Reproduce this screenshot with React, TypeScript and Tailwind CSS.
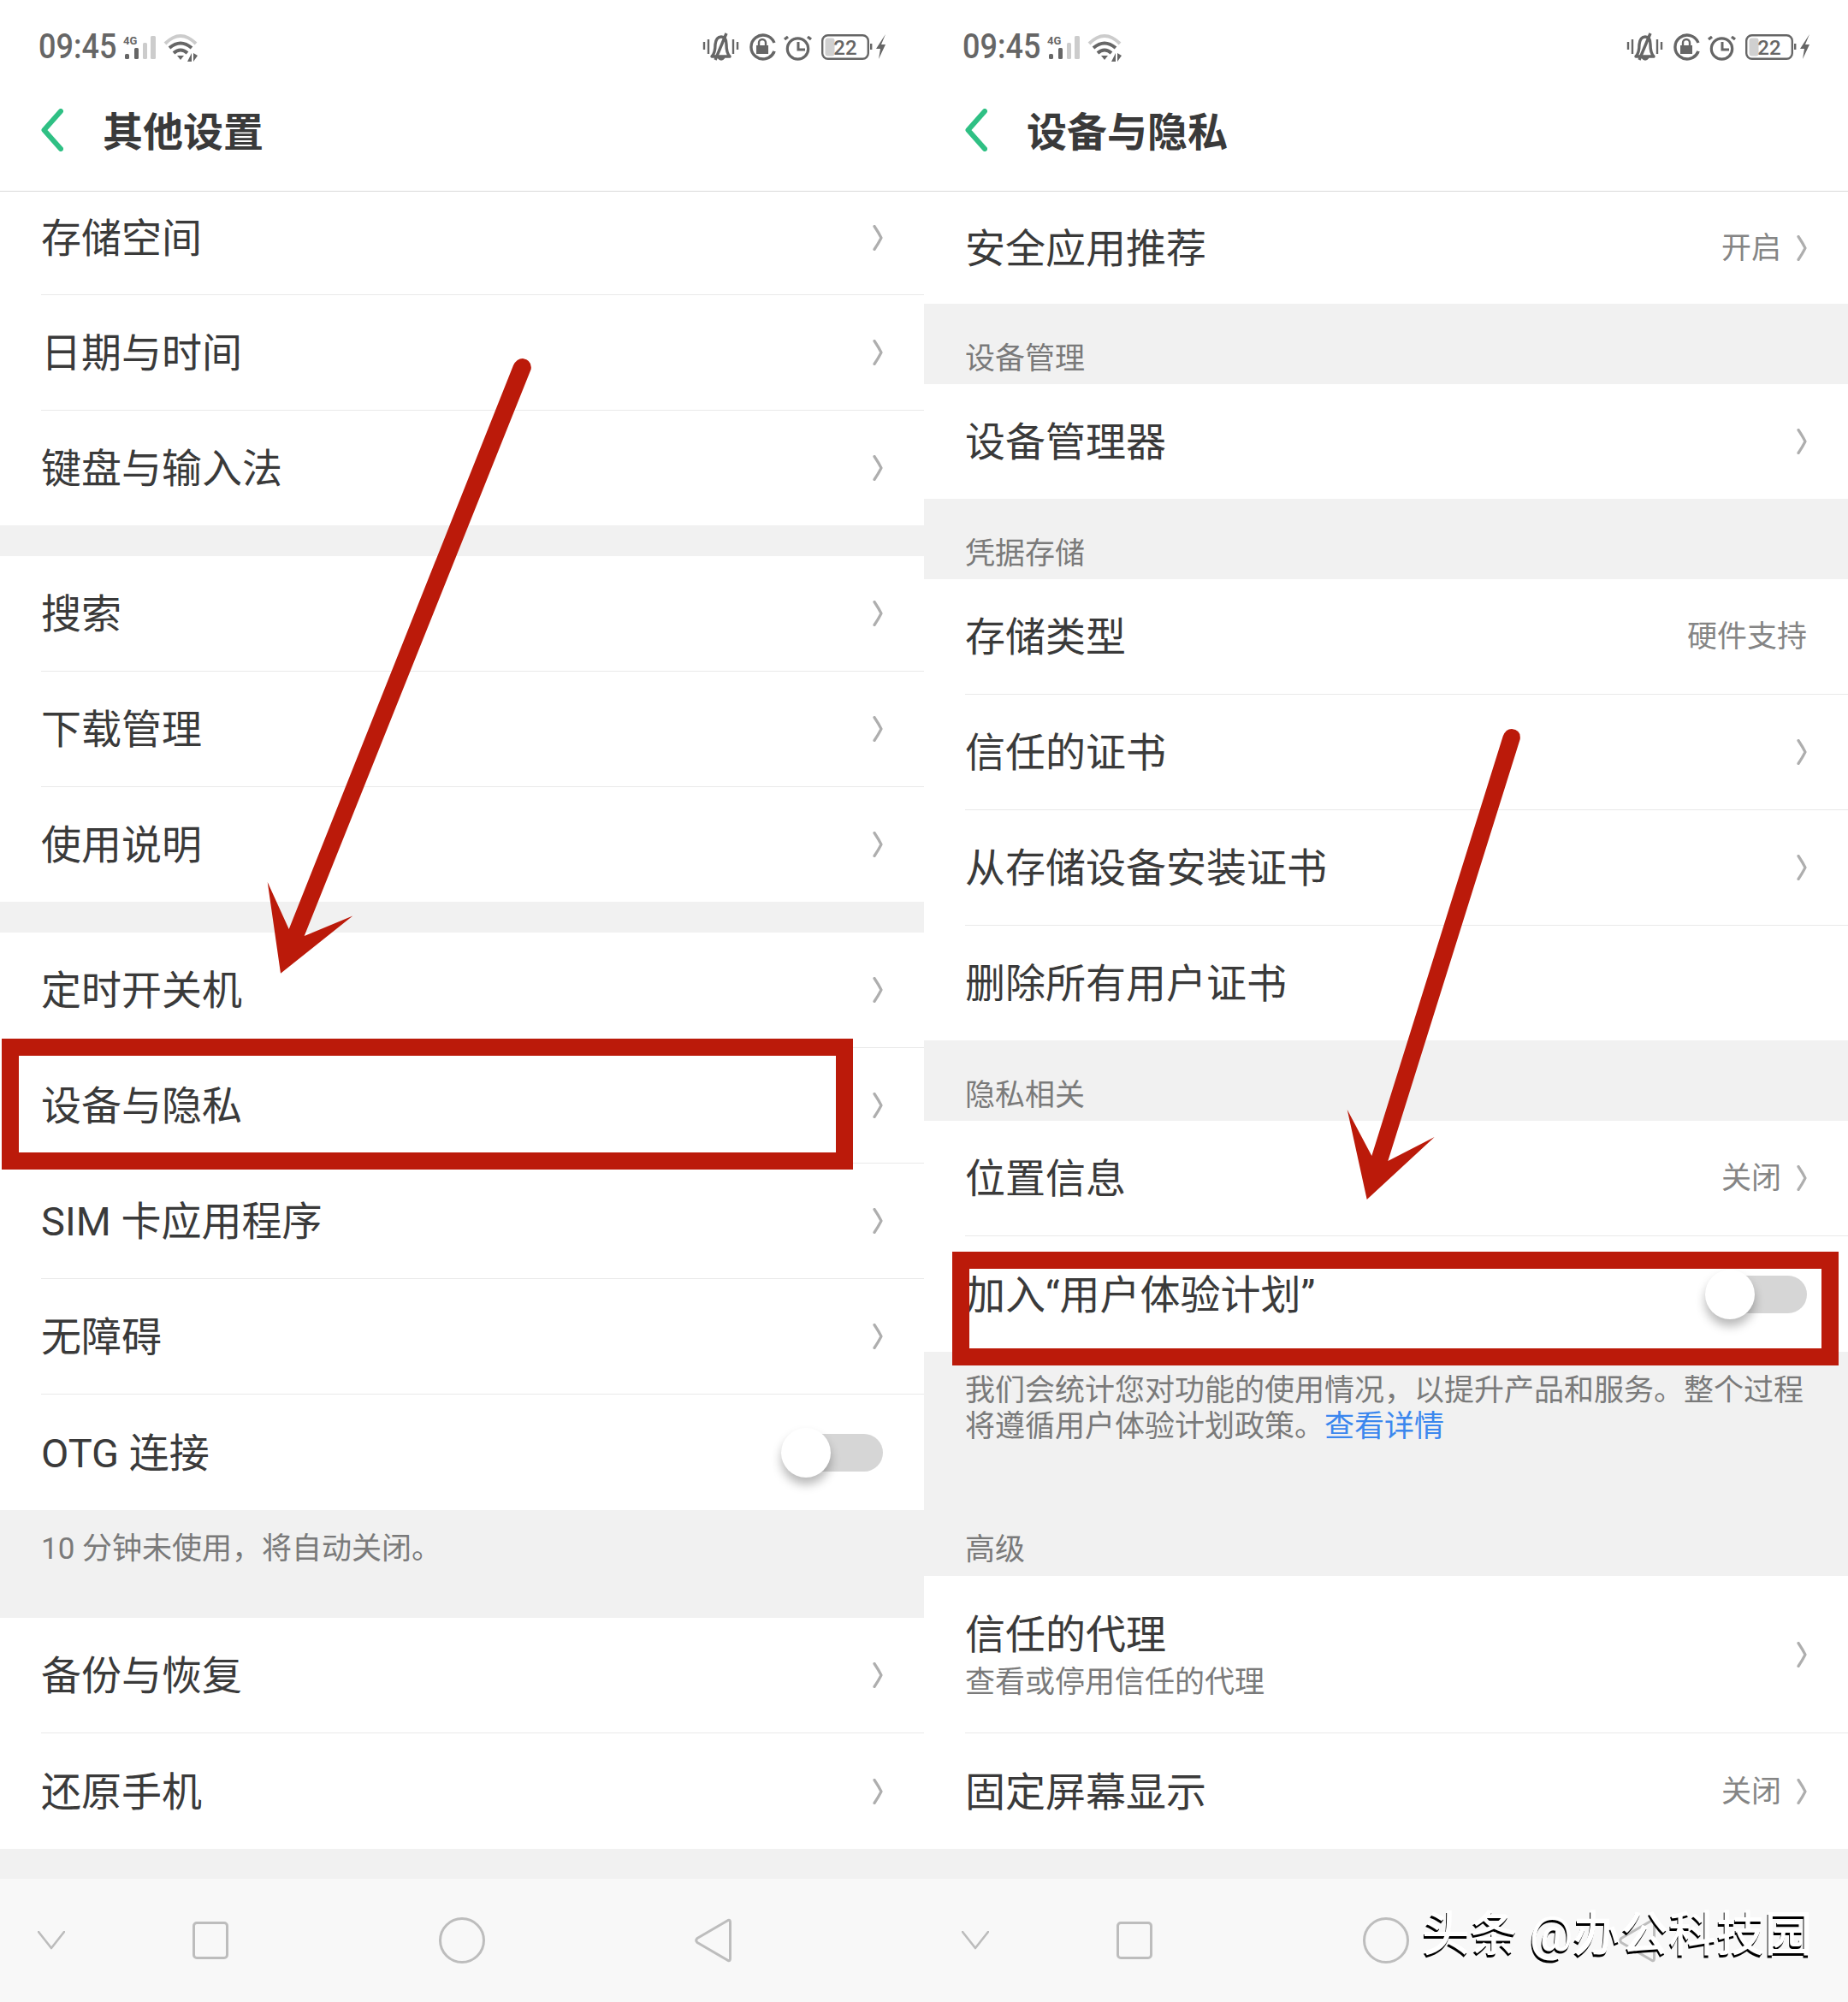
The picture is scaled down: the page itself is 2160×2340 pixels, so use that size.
import type { ReactNode } from "react";

function Chevron() {
  return (
    <svg width="12" height="30" viewBox="0 0 12 30" fill="none" className="shrink-0">
      <path d="M2 1.5 Q7 9 10 15 Q7 21 2 28.5" stroke="#aeaeae" strokeWidth="3.2" strokeLinecap="round" strokeLinejoin="round" />
    </svg>
  );
}

function Toggle() {
  return (
    <div className="relative h-[44px] w-[116px] rounded-full bg-[#d6d6d6]">
      <div className="absolute left-[-3px] top-[-7px] h-[58px] w-[58px] rounded-full bg-white shadow-[0_8px_12px_rgba(0,0,0,0.28)]" />
    </div>
  );
}

function Row({
  label,
  value,
  chevron = true,
  last = false,
  h = "h-[135px]",
  right,
  inner = "",
}: {
  label: ReactNode;
  value?: string;
  chevron?: boolean;
  last?: boolean;
  h?: string;
  right?: ReactNode;
  inner?: string;
}) {
  return (
    <div className={`${h} bg-white pl-[48px]`}>
      <div className={`flex h-full items-center justify-between pr-[48px] ${last ? "" : "border-b border-[#e9e9e9]"} ${inner}`}>
        <div className="pt-[2px] text-[47px] leading-[56px] text-[#3a3a3a]">{label}</div>
        <div className="flex items-center gap-[18px]">
          {value && <span className="pt-[3px] text-[35px] text-[#858585]">{value}</span>}
          {right}
          {chevron && !right && <Chevron />}
        </div>
      </div>
    </div>
  );
}

function Section({ label }: { label: string }) {
  return (
    <div className="flex h-[94px] items-end bg-[#f1f1f1] pb-[6px] pl-[48px] text-[35px] leading-[46px] text-[#7a7a7a]">{label}</div>
  );
}

function StatusBar() {
  return (
    <div className="flex h-[80px] items-center justify-between pl-[45px] pr-[40px] pt-[30px]">
      <div className="flex items-center">
        <span className="origin-center scale-y-[1.12] text-[36px] font-medium leading-none text-[#666]">09:45</span>
        <svg width="100" height="40" viewBox="134 35 100 40" className="ml-[-2px]" fill="none">
          <text x="144" y="52" fontSize="13" fontWeight="700" fill="#666">4G</text>
          <rect x="146" y="63" width="5" height="6" rx="1.5" fill="#666" />
          <rect x="157" y="56" width="5" height="13" rx="1.5" fill="#666" />
          <rect x="167" y="50" width="5" height="19" rx="1.5" fill="#ccc" />
          <rect x="176" y="42" width="6" height="27" rx="1.5" fill="#ccc" />
          <path d="M193 51 Q211 33 229 51" stroke="#ccc" strokeWidth="4" />
          <path d="M198 56 Q211 45 224 56" stroke="#666" strokeWidth="4" />
          <path d="M203 62 Q211 55 219 62" stroke="#666" strokeWidth="4" />
          <path d="M207 65 L215 65 L211 70 Z" fill="#666" />
          <path d="M219 72 L224 62 L224 72 Z M226 62 L226 72 L231 65 Z" fill="#666" />
        </svg>
      </div>
      <svg width="220" height="40" viewBox="820 35 220 40" fill="none">
        <g stroke="#666" strokeWidth="2.4">
          <path d="M823 49 V58 M828 46 V63 M857 46 V63 M862 49 V58" />
        </g>
        <path d="M832 66 Q836 62 836 52 Q837 43 843 43 Q849 43 849 52 Q849 62 853 66 Z M840 67 Q843 71 846 67" stroke="#666" strokeWidth="3.4" strokeLinejoin="round" />
        <path d="M849 39 L836 70" stroke="#666" strokeWidth="3.4" />
        <path d="M905 60 A14 14 0 1 1 905 50" stroke="#666" strokeWidth="3.4" />
        <path d="M905 60 A14 14 0 0 1 899 67" stroke="#666" strokeWidth="3.4" />
        <rect x="884" y="53" width="14" height="10" fill="#666" />
        <path d="M887 53 V50 A4 4 0 0 1 895 50 V53" stroke="#666" strokeWidth="2.4" />
        <circle cx="932.5" cy="57" r="12.2" stroke="#666" strokeWidth="3.2" />
        <path d="M921 43 L917 46 M944 43 L948 46" stroke="#666" strokeWidth="3.4" />
        <path d="M933 49 V58 H941" stroke="#666" strokeWidth="3" />
        <rect x="961.2" y="41.2" width="53.6" height="27.6" rx="6.5" stroke="#666" strokeWidth="2.4" />
        <rect x="964.5" y="44.5" width="11" height="21" rx="3" fill="#d0d0d0" />
        <text x="988" y="63.5" textAnchor="middle" fontSize="24" fontWeight="500" fill="#666">22</text>
        <rect x="1017" y="51" width="2.4" height="7" fill="#666" />
        <path d="M1035 40 L1024 57 L1029 57 L1027 69 L1035 52 L1030 52 Z" fill="#666" />
      </svg>
    </div>
  );
}

function Header({ title }: { title: string }) {
  return (
    <div className="flex h-[144px] items-center border-b border-[#d9d9d9] pl-[48px]">
      <svg width="26" height="50" viewBox="0 0 26 50" fill="none">
        <path d="M23 3 L3.5 25 L23 47" stroke="#2fc084" strokeWidth="6" strokeLinecap="round" strokeLinejoin="round" />
      </svg>
      <h1 className="ml-[46px] pt-[5px] text-[47px] font-bold leading-none text-[#3a3a3a]">{title}</h1>
    </div>
  );
}

function NavBar() {
  return (
    <div className="flex h-[144px] items-center bg-[#f8f8f8] pl-[44px]">
      <svg width="32" height="22" viewBox="0 0 32 22" fill="none">
        <path d="M1 1 L16 20 L31 1" stroke="#bcbcbc" strokeWidth="2.6" strokeLinecap="round" strokeLinejoin="round" />
      </svg>
      <div className="ml-[149px] h-[44px] w-[42px] rounded-[5px] border-[3px] border-[#bdbdbd]" />
      <div className="ml-[246px] h-[54px] w-[54px] rounded-full border-[3px] border-[#bdbdbd]" />
      <svg width="44" height="52" viewBox="0 0 44 52" fill="none" className="ml-[245px]">
        <path d="M39 2.5 Q41.5 1.5 41.5 5 V47 Q41.5 50.5 39 49.5 L3 28.5 Q0.5 26 3 23.5 Z" stroke="#bdbdbd" strokeWidth="3" strokeLinejoin="round" />
      </svg>
    </div>
  );
}

function Gap({ h = "h-[36px]" }: { h?: string }) {
  return <div className={`${h} bg-[#f1f1f1]`} />;
}

function LeftPanel() {
  return (
    <div className="flex w-[1080px] flex-col">
      <StatusBar />
      <Header title="其他设置" />
      <Row label="存储空间" h="h-[121px]" inner="pb-[13px]" />
      <Row label="日期与时间" />
      <Row label="键盘与输入法" h="h-[134px]" last />
      <Gap />
      <Row label="搜索" />
      <Row label="下载管理" />
      <Row label="使用说明" h="h-[134px]" last />
      <Gap />
      <Row label="定时开关机" />
      <Row label="设备与隐私" />
      <Row label="SIM 卡应用程序" />
      <Row label="无障碍" />
      <Row label="OTG 连接" last right={<Toggle />} />
      <div className="h-[126px] bg-[#f1f1f1] pl-[48px] pt-[25px] text-[35px] leading-[42px] text-[#7a7a7a]">10 分钟未使用，将自动关闭。</div>
      <Row label="备份与恢复" />
      <Row label="还原手机" last />
      <Gap h="h-[35px]" />
      <NavBar />
    </div>
  );
}

function RightPanel() {
  return (
    <div className="flex w-[1080px] flex-col">
      <StatusBar />
      <Header title="设备与隐私" />
      <Row label="安全应用推荐" value="开启" h="h-[131px]" last />
      <Section label="设备管理" />
      <Row label="设备管理器" h="h-[134px]" last />
      <Section label="凭据存储" />
      <Row label="存储类型" value="硬件支持" chevron={false} />
      <Row label="信任的证书" />
      <Row label="从存储设备安装证书" />
      <Row label="删除所有用户证书" chevron={false} h="h-[134px]" last />
      <Section label="隐私相关" />
      <Row label="位置信息" value="关闭" />
      <Row label="加入“用户体验计划”" last right={<Toggle />} />
      <div className="h-[262px] bg-[#f1f1f1] pl-[48px] pr-[40px] pt-[25px] text-[35px] leading-[42px] text-[#7a7a7a]">
        <p>
          我们会统计您对功能的使用情况，以提升产品和服务。整个过程
          <br />
          将遵循用户体验计划政策。<span className="text-[#3b87ee]">查看详情</span>
        </p>
        <p className="mt-[100px] leading-[46px]">高级</p>
      </div>
      <Row
        h="h-[184px]"
        label={
          <div className="pt-[9px]">
            <div>信任的代理</div>
            <div className="text-[35px] text-[#7a7a7a]">查看或停用信任的代理</div>
          </div>
        }
      />
      <Row label="固定屏幕显示" value="关闭" last />
      <Gap h="h-[35px]" />
      <NavBar />
    </div>
  );
}

export default function App() {
  return (
    <div className="relative flex h-[2340px] w-[2160px] overflow-hidden bg-white [font-family:Roboto,'Noto_Sans_CJK_SC',sans-serif]">
      <LeftPanel />
      <RightPanel />

      {/* annotations drawn over the screenshot */}
      <div className="absolute left-[2px] top-[1214px] h-[153px] w-[995px] border-[20px] border-[#bb1a0a]" />
      <div className="absolute left-[1113px] top-[1463px] h-[133px] w-[1036px] border-[20px] border-[#bb1a0a]" />
      <svg width="2160" height="2340" viewBox="0 0 2160 2340" className="pointer-events-none absolute left-0 top-0" fill="#bb1a0a">
        <path d="M600 427 Q604 419 611 419 Q622 421 620.7 431.4 L355.7 1094 L412.3 1070.5 L328 1137.7 L312.7 1031 L337.7 1086 Z" />
        <path d="M1756.7 860.4 Q1760 852 1767 852 Q1778 853 1776.7 864 L1622.3 1357 L1676.7 1329 L1597.7 1402 L1574.7 1297 L1603.3 1351 Z" />
      </svg>
      <div className="absolute left-[1662px] top-[2223px] text-[56px] font-medium leading-[76px] text-white [text-shadow:-1px_3px_0_#000]">头条 @办公科技园</div>
    </div>
  );
}
